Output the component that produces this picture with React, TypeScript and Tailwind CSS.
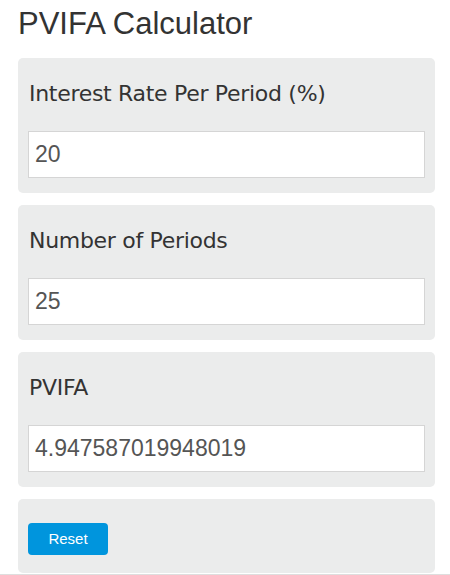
const fields = [
  { label: "Interest Rate Per Period (%)", value: "20" },
  { label: "Number of Periods", value: "25" },
  { label: "PVIFA", value: "4.947587019948019" },
];

export default function App() {
  return (
    <div className="min-h-[575px] w-[450px] bg-white pt-[5px] border-b border-[#dedede]">
      <h1 className="ml-[18px] text-[31px] leading-[37px] text-[#333] font-['Liberation_Sans',Arial,sans-serif]">
        PVIFA Calculator
      </h1>
      <div className="ml-[18px] mr-[15px] mt-[16px] flex flex-col gap-[12px]">
        {fields.map((f) => (
          <div key={f.label} className="rounded-[5px] bg-[#ebecec] px-[10px] pt-[22px] pb-[15px]">
            <label className="block pl-[1px] text-[22px] leading-[28px] text-[#333] font-['DejaVu_Sans','Noto_Sans',sans-serif] tracking-[-0.3px]">
              {f.label}
            </label>
            <input
              readOnly
              value={f.value}
              className="mt-[23px] block h-[47px] w-full border border-[#d5d5d5] bg-white px-[6px] text-[23px] text-[#555] font-['Liberation_Sans',Arial,sans-serif] outline-none"
            />
          </div>
        ))}
        <div className="rounded-[5px] bg-[#ebecec] px-[10px] pt-[24px] pb-[18px]">
          <button className="h-[32px] w-[80px] rounded-[4px] bg-[#0095dd] text-[15px] text-white font-['Liberation_Sans',Arial,sans-serif]">
            Reset
          </button>
        </div>
      </div>
    </div>
  );
}
